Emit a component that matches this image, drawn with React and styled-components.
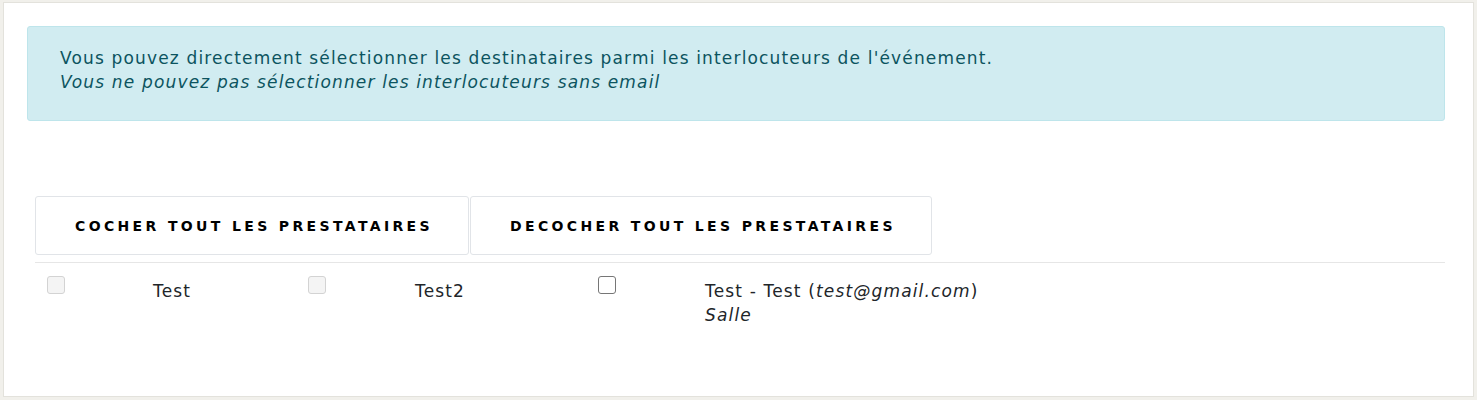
import React from "react";
import styled, { createGlobalStyle } from "styled-components";

const GlobalStyle = createGlobalStyle`
  html, body {
    margin: 0;
    padding: 0;
    background: #f1f0eb;
  }
  body {
    font-family: "DejaVu Sans", "Liberation Sans", sans-serif;
    font-size: 17px;
    letter-spacing: 1.16px;
    color: #212529;
  }
  * { box-sizing: border-box; }
`;

const Card = styled.div`
  margin: 2px 3px 3px 3px;
  height: 395px;
  background: #ffffff;
  border: 1px solid #e3e2dc;
  padding: 23px 28px 0 23px;
`;

const Alert = styled.div`
  background: #d1ecf1;
  border: 1px solid #bee5eb;
  border-radius: 3px;
  color: #0c5460;
  padding: 19px 32px 26px 32px;
  line-height: 24px;
`;

const AlertLine = styled.div``;

const AlertNote = styled.div`
  font-style: italic;
`;

const Recipients = styled.div`
  margin: 75px 0 0 8px;
`;

const ButtonBar = styled.div`
  display: flex;
  align-items: stretch;
  gap: 1px;
`;

const ActionButton = styled.button`
  appearance: none;
  background: #ffffff;
  border: 1px solid #e1e4e8;
  border-radius: 3px;
  padding: 19px 35px 18px 39px;
  font-family: "DejaVu Sans", "Liberation Sans", sans-serif;
  font-weight: bold;
  font-size: 14px;
  line-height: 20px;
  letter-spacing: 3.36px;
  text-transform: uppercase;
  color: #000000;
  cursor: pointer;
`;

const ContactGrid = styled.div`
  margin-top: 7px;
  border-top: 1px solid #e6e6e6;
  display: grid;
  grid-template-columns: 106px 155px 107px 183px 107px 1fr;
  align-items: start;
`;

const CheckCell = styled.div`
  padding: 13px 12px;
  display: flex;
`;

const LabelCell = styled.div`
  padding: 16px 12px;
  line-height: 24px;
`;

const Check = styled.input.attrs({ type: "checkbox" })`
  appearance: none;
  margin: 0;
  width: 18px;
  height: 18px;
  border-radius: 3px;
  border: 1px solid ${(p) => (p.disabled ? "#d3d3d3" : "#767676")};
  background: ${(p) => (p.disabled ? "#f4f4f4" : "#ffffff")};
`;

const Em = styled.i`
  font-style: italic;
`;

const contacts = [
  { id: 1, disabled: true, label: "Test" },
  { id: 2, disabled: true, label: "Test2" },
  {
    id: 3,
    disabled: false,
    label: (
      <>
        Test - Test (<Em>test@gmail.com</Em>)
        <br />
        <Em>Salle</Em>
      </>
    ),
  },
];

export default function App() {
  return (
    <>
      <GlobalStyle />
      <Card>
        <Alert>
          <AlertLine>
            Vous pouvez directement sélectionner les destinataires parmi les
            interlocuteurs de l'événement.
          </AlertLine>
          <AlertNote>
            Vous ne pouvez pas sélectionner les interlocuteurs sans email
          </AlertNote>
        </Alert>
        <Recipients>
          <ButtonBar>
            <ActionButton>Cocher tout les prestataires</ActionButton>
            <ActionButton>Decocher tout les prestataires</ActionButton>
          </ButtonBar>
          <ContactGrid>
            {contacts.map((c) => (
              <React.Fragment key={c.id}>
                <CheckCell>
                  <Check disabled={c.disabled} />
                </CheckCell>
                <LabelCell>{c.label}</LabelCell>
              </React.Fragment>
            ))}
          </ContactGrid>
        </Recipients>
      </Card>
    </>
  );
}
